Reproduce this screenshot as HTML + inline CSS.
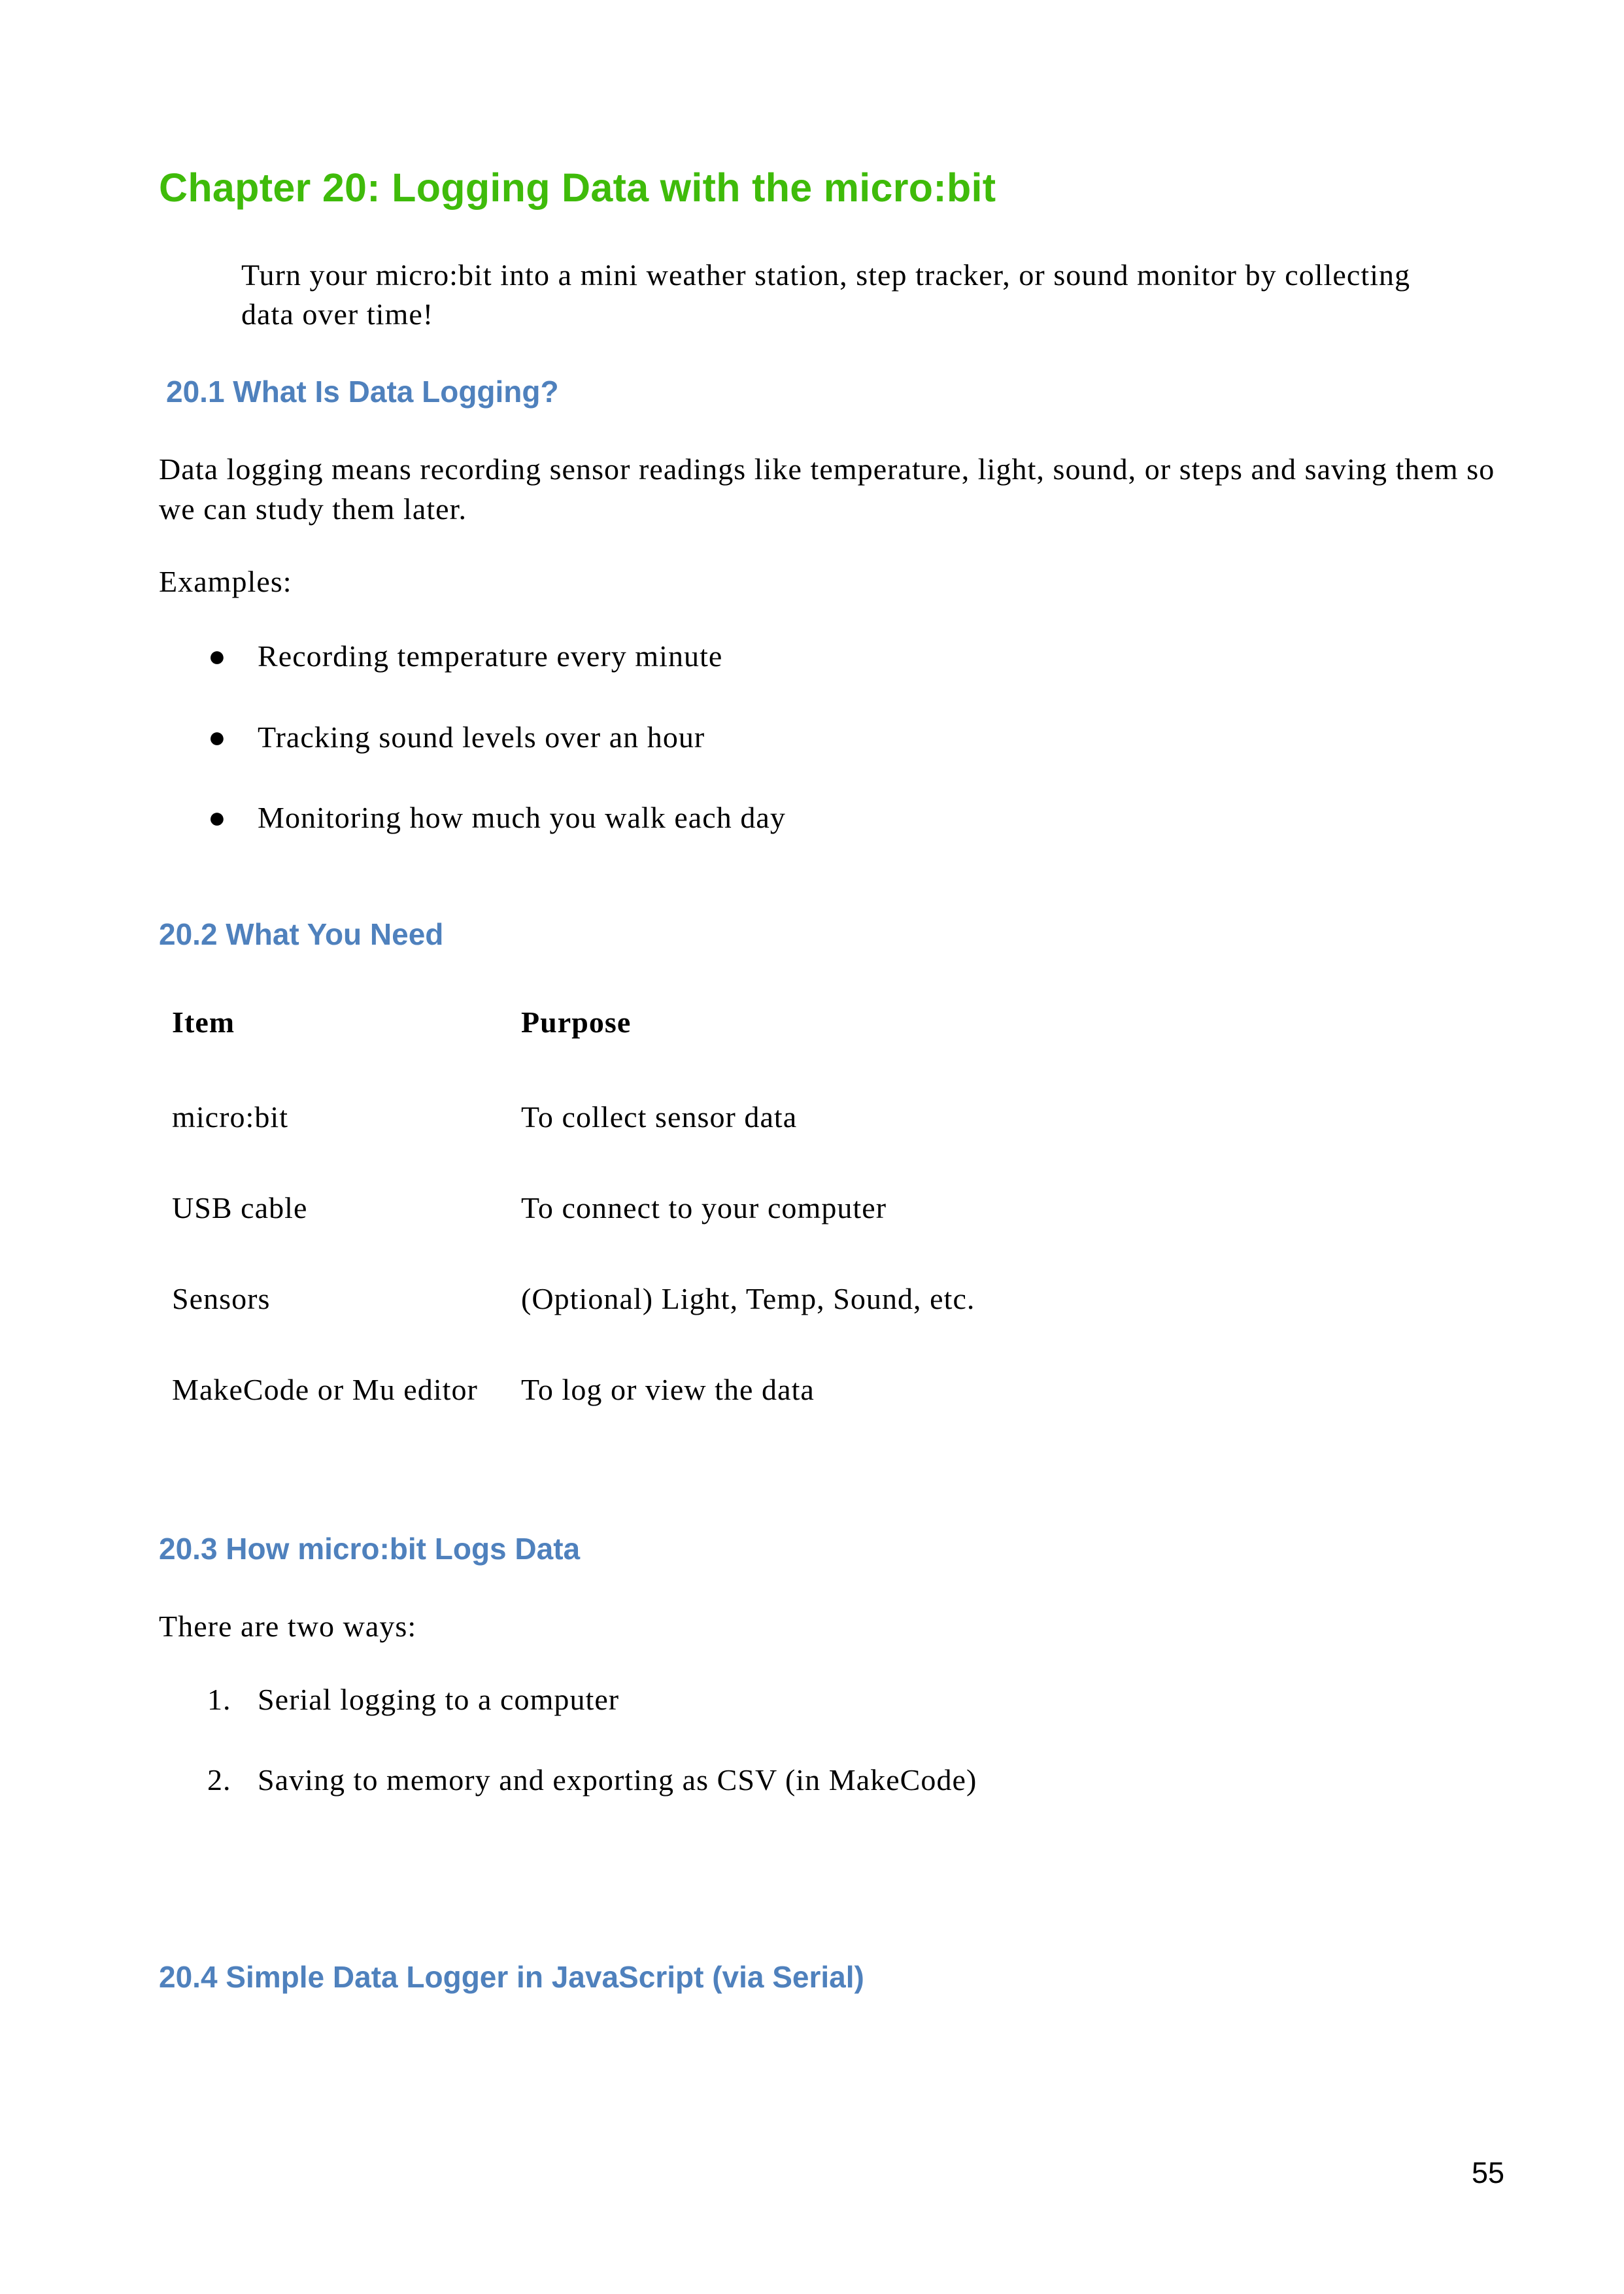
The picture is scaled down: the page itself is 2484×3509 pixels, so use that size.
<!DOCTYPE html>
<html><head><meta charset="utf-8"><style>
html,body{margin:0;padding:0;background:#fff;}
body{width:2484px;height:3509px;position:relative;overflow:hidden;font-family:"Liberation Serif",serif;color:#000;}
.t{position:absolute;white-space:nowrap;line-height:60px;font-size:46px;letter-spacing:1.05px;}
.h{font-family:"Liberation Sans",sans-serif;font-weight:bold;color:#4f81bd;font-size:46px;letter-spacing:0;}
.b{font-weight:bold;}
</style></head><body>
<div class="t h" style="left:243px;top:254px;font-size:61px;line-height:66px;color:#3fbb0a;letter-spacing:0.3px">Chapter 20: Logging Data with the micro:bit</div>
<div class="t" style="left:369px;top:391px">Turn your micro:bit into a mini weather station, step tracker, or sound monitor by collecting</div>
<div class="t" style="left:369px;top:451px">data over time!</div>
<div class="t h" style="left:254px;top:569px">20.1 What Is Data Logging?</div>
<div class="t" style="left:243px;top:688px">Data logging means recording sensor readings like temperature, light, sound, or steps and saving them so</div>
<div class="t" style="left:243px;top:749px">we can study them later.</div>
<div class="t" style="left:243px;top:860px">Examples:</div>
<div class="t" style="left:318px;top:974px">●</div><div class="t" style="left:394px;top:974px">Recording temperature every minute</div>
<div class="t" style="left:318px;top:1098px">●</div><div class="t" style="left:394px;top:1098px">Tracking sound levels over an hour</div>
<div class="t" style="left:318px;top:1221px">●</div><div class="t" style="left:394px;top:1221px">Monitoring how much you walk each day</div>
<div class="t h" style="left:243px;top:1399px">20.2 What You Need</div>
<div class="t b" style="left:263px;top:1534px">Item</div><div class="t b" style="left:797px;top:1534px">Purpose</div>
<div class="t" style="left:263px;top:1679px">micro:bit</div><div class="t" style="left:797px;top:1679px">To collect sensor data</div>
<div class="t" style="left:263px;top:1818px">USB cable</div><div class="t" style="left:797px;top:1818px">To connect to your computer</div>
<div class="t" style="left:263px;top:1957px">Sensors</div><div class="t" style="left:797px;top:1957px">(Optional) Light, Temp, Sound, etc.</div>
<div class="t" style="left:263px;top:2096px">MakeCode or Mu editor</div><div class="t" style="left:797px;top:2096px">To log or view the data</div>
<div class="t h" style="left:243px;top:2339px">20.3 How micro:bit Logs Data</div>
<div class="t" style="left:243px;top:2458px">There are two ways:</div>
<div class="t" style="left:317px;top:2570px">1.</div><div class="t" style="left:394px;top:2570px">Serial logging to a computer</div>
<div class="t" style="left:317px;top:2693px">2.</div><div class="t" style="left:394px;top:2693px">Saving to memory and exporting as CSV (in MakeCode)</div>
<div class="t h" style="left:243px;top:2994px">20.4 Simple Data Logger in JavaScript (via Serial)</div>
<div class="t" style="left:2251px;top:3296px;font-family:'Liberation Sans',sans-serif;font-size:45px;line-height:56px;letter-spacing:0">55</div>
</body></html>
